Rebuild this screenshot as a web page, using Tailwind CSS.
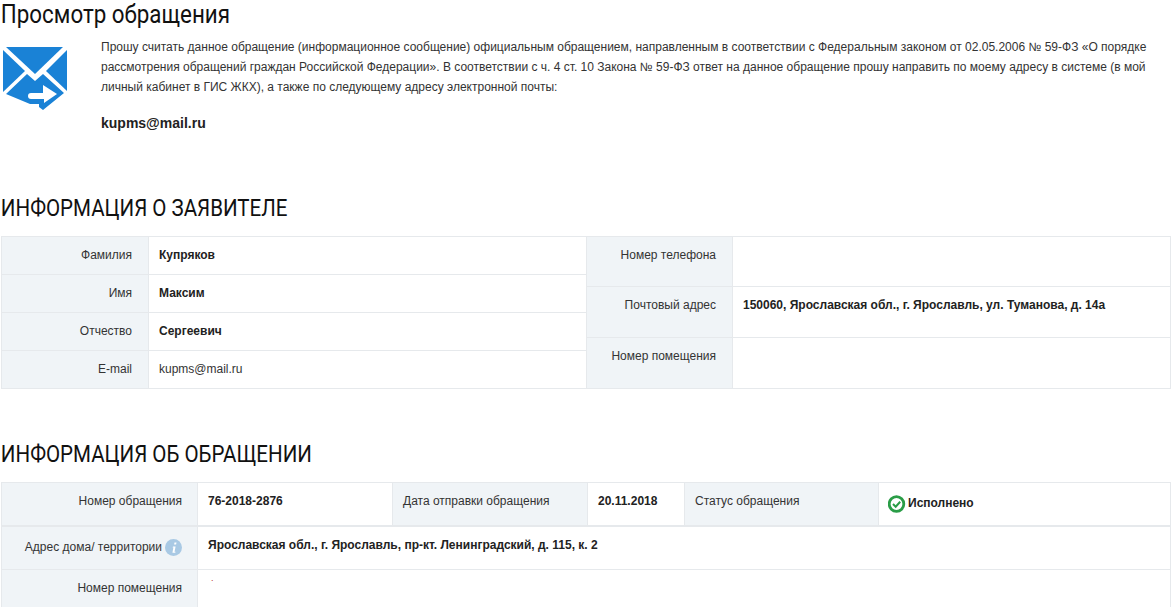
<!DOCTYPE html>
<html lang="ru"><head><meta charset="utf-8">
<script src="https://cdn.jsdelivr.net/npm/@tailwindcss/browser@4"></script>
</head>
<body class="bg-white overflow-hidden">
<div class="w-[1172px] h-[607px] overflow-hidden font-['Liberation_Sans',Arial,sans-serif] text-[12px] text-[#333]">
  <h1 class="h-[30px] pl-px text-[26px] leading-[29px] font-normal text-[#111] font-['Roboto',sans-serif] origin-left scale-x-[0.86] whitespace-nowrap">Просмотр обращения</h1>
  <div class="flex h-[163px]">
    <div class="w-[101px] shrink-0">
      <svg width="80" height="80" viewBox="0 40 80 80" class="mt-[10px]">
        <g fill="#1a82d6">
          <polygon points="6,47 63,47 35,74"/>
          <polygon points="3,50 25,71 3,92"/>
          <polygon points="67,50 46,71 67,91"/>
          <polygon points="6,94 27,74 35,81 43,74 64,93 43,110 39,107 39,104 30,104 Q25,104 25,99 L25,94"/>
        </g>
        <path fill="#fff" d="M43 85 L57 94 L44 103 V99 H31 a3 3 0 0 1 0 -6 H43 z"/>
      </svg>
    </div>
    <div class="pt-[7px] w-[1054px] leading-[20px] text-[12px]">
      <p class="text-[#333]">Прошу считать данное обращение (информационное сообщение) официальным обращением, направленным в соответствии с Федеральным законом от 02.05.2006 № 59-ФЗ «О порядке рассмотрения обращений граждан Российской Федерации». В соответствии с ч. 4 ст. 10 Закона № 59-ФЗ ответ на данное обращение прошу направить по моему адресу в системе (в мой личный кабинет в ГИС ЖКХ), а также по следующему адресу электронной почты:</p>
      <p class="mt-[16px] text-[14px] font-bold text-[#222]">kupms@mail.ru</p>
    </div>
  </div>
  <h2 class="h-[30px] pl-px text-[24px] leading-[30px] font-normal text-[#111] font-['Roboto',sans-serif] origin-left scale-x-[0.855] whitespace-nowrap">ИНФОРМАЦИЯ О ЗАЯВИТЕЛЕ</h2>
  <div class="ml-px mt-[13px] w-[1170px] h-[153px] border border-[#e6e9ec] flex">
    <div class="w-[585px] grid grid-cols-[147px_1fr] grid-rows-[38px_38px_38px_1fr] border-r border-[#e6e9ec]">
      <div class="bg-[#f0f4f7] border-r border-b border-[#e6e9ec] pr-[16px] pt-[9px] text-right">Фамилия</div>
      <div class="border-b border-[#e6e9ec] pl-[10px] pt-[9px] font-bold text-[#222]">Купряков</div>
      <div class="bg-[#f0f4f7] border-r border-b border-[#e6e9ec] pr-[16px] pt-[9px] text-right">Имя</div>
      <div class="border-b border-[#e6e9ec] pl-[10px] pt-[9px] font-bold text-[#222]">Максим</div>
      <div class="bg-[#f0f4f7] border-r border-b border-[#e6e9ec] pr-[16px] pt-[9px] text-right">Отчество</div>
      <div class="border-b border-[#e6e9ec] pl-[10px] pt-[9px] font-bold text-[#222]">Сергеевич</div>
      <div class="bg-[#f0f4f7] border-r border-[#e6e9ec] pr-[16px] pt-[9px] text-right">E-mail</div>
      <div class="pl-[10px] pt-[9px]">kupms@mail.ru</div>
    </div>
    <div class="flex-1 grid grid-cols-[146px_1fr] grid-rows-[50px_51px_1fr]">
      <div class="bg-[#f0f4f7] border-r border-b border-[#e6e9ec] pr-[16px] pt-[9px] text-right">Номер телефона</div>
      <div class="border-b border-[#e6e9ec]"></div>
      <div class="bg-[#f0f4f7] border-r border-b border-[#e6e9ec] pr-[16px] pt-[9px] text-right">Почтовый адрес</div>
      <div class="border-b border-[#e6e9ec] pl-[10px] pt-[9px] font-bold text-[#222]">150060, Ярославская обл., г. Ярославль, ул. Туманова, д. 14а</div>
      <div class="bg-[#f0f4f7] border-r border-[#e6e9ec] pr-[16px] pt-[9px] text-right">Номер помещения</div>
      <div></div>
    </div>
  </div>
  <h2 class="mt-[50px] h-[30px] pl-px text-[24px] leading-[30px] font-normal text-[#111] font-['Roboto',sans-serif] origin-left scale-x-[0.855] whitespace-nowrap">ИНФОРМАЦИЯ ОБ ОБРАЩЕНИИ</h2>
  <div class="ml-px mt-[13px] w-[1170px] border-t border-l border-r border-[#e6e9ec]">
    <div class="flex h-[44px] border-b-2 border-[#e6e9ec]">
      <div class="w-[196px] bg-[#f0f4f7] border-r border-[#e6e9ec] pr-[15px] pt-[9px] text-right">Номер обращения</div>
      <div class="w-[195px] border-r border-[#e6e9ec] pl-[10px] pt-[9px] font-bold text-[#222]">76-2018-2876</div>
      <div class="w-[195px] bg-[#f0f4f7] border-r border-[#e6e9ec] pl-[10px] pt-[9px]">Дата отправки обращения</div>
      <div class="w-[97px] border-r border-[#e6e9ec] pl-[10px] pt-[9px] font-bold text-[#222]">20.11.2018</div>
      <div class="w-[194px] bg-[#f0f4f7] border-r border-[#e6e9ec] pl-[10px] pt-[9px]">Статус обращения</div>
      <div class="flex-1 pl-[9px] pt-[12px] flex items-start gap-[2px] font-bold text-[#222]">
        <svg width="18" height="18" viewBox="0 0 18 18" class="shrink-0"><circle cx="8.500" cy="9" r="7.300" fill="none" stroke="#2a9d47" stroke-width="2.800"/><path d="M5 9l2.700 2.700L12.200 6.800" fill="none" stroke="#2a9d47" stroke-width="2"/></svg>
        <span class="-mt-px">Исполнено</span>
      </div>
    </div>
    <div class="flex h-[43px] border-b border-[#e6e9ec]">
      <div class="w-[196px] bg-[#f0f4f7] border-r border-[#e6e9ec] pr-[15px] pt-[9px] flex justify-end gap-[3px]">
        <span class="pt-[2px]">Адрес дома/ территории</span>
        <svg width="17" height="17" viewBox="0 0 17 17" class="shrink-0 mt-[3px]"><circle cx="8.500" cy="8.500" r="8.500" fill="#a9c9e4"/><path d="M9.500 3.500h2l-.4 2h-2zM8 7.500h2.600l-1.100 5.200h1l-.2 1H7.400l1-5.200h-.8z" fill="#fff"/></svg>
      </div>
      <div class="flex-1 pl-[10px] pt-[9px] font-bold text-[#222]">Ярославская обл., г. Ярославль, пр-кт. Ленинградский, д. 115, к. 2</div>
    </div>
    <div class="flex h-[38px]">
      <div class="w-[196px] bg-[#f0f4f7] border-r border-[#e6e9ec] pr-[15px] pt-[9px] text-right">Номер помещения</div>
      <div class="flex-1 pl-[13px] pt-[2px] text-[#b33] text-[9px]">.</div>
    </div>
  </div>
</div>
</body></html>
